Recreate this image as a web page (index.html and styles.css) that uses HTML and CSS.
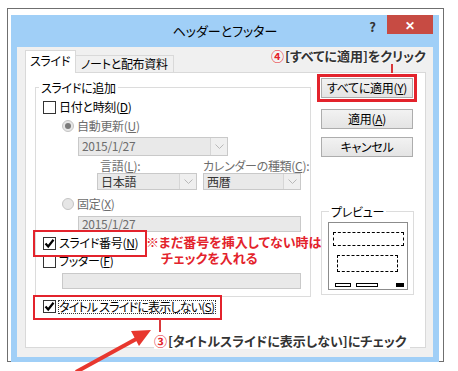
FILE: index.html
```html
<!DOCTYPE html>
<html lang="ja">
<head>
    <meta charset="UTF-8">
    <title>ヘッダーとフッター</title>
    <link rel="stylesheet" href="styles.css">
</head>
<body>
    <div class="page">
        <div class="frame">
            <div class="window">
                <div class="titlebar">
                    <span></span>
                    <span class="title">ヘッダーとフッター</span>
                    <div class="caption-btns">
                        <span class="help">?</span>
                        <span class="close">✕</span>
                    </div>
                </div>
                <div class="client">
                    <div class="tabs">
                        <div class="tab active">スライド</div>
                        <div class="tab">ノートと配布資料</div>
                    </div>
                    <div class="panel">
                        <div class="left">
                            <fieldset class="group">
                                <legend>スライドに追加</legend>
                                <div class="row r1">
                                    <span class="cb"></span>
                                    <span>日付と時刻(<u>D</u>)</span>
                                </div>
                                <div class="row r2 indent1 dim">
                                    <span class="radio on"></span>
                                    <span>自動更新(<u>U</u>)</span>
                                </div>
                                <div class="row r3 indent2">
                                    <div class="combo date-combo">
                                        <span class="value">2015/1/27</span>
                                        <span class="drop"><svg width="9" height="5" viewBox="0 0 9 5"><path d="M0.5 0.5 L4.5 4.5 L8.5 0.5" fill="none" stroke="#b8b8b8"/></svg></span>
                                    </div>
                                </div>
                                <div class="row r4 dim">
                                    <span class="lbl-lang">言語(<u>L</u>):</span>
                                    <span class="lbl-cal">カレンダーの種類(<u>C</u>):</span>
                                </div>
                                <div class="row r5">
                                    <div class="combo lang-combo">
                                        <span class="value dark">日本語</span>
                                        <span class="drop"><svg width="9" height="5" viewBox="0 0 9 5"><path d="M0.5 0.5 L4.5 4.5 L8.5 0.5" fill="none" stroke="#b8b8b8"/></svg></span>
                                    </div>
                                    <div class="combo cal-combo">
                                        <span class="value dark">西暦</span>
                                        <span class="drop"><svg width="9" height="5" viewBox="0 0 9 5"><path d="M0.5 0.5 L4.5 4.5 L8.5 0.5" fill="none" stroke="#b8b8b8"/></svg></span>
                                    </div>
                                </div>
                                <div class="row r6 indent1 dim">
                                    <span class="radio"></span>
                                    <span>固定(<u>X</u>)</span>
                                </div>
                                <div class="row r7 indent2">
                                    <div class="field fixed-field">2015/1/27</div>
                                </div>
                                <div class="row r8">
                                    <span class="check-label boxed-num">
                                        <span class="cb"><svg width="11" height="11" viewBox="0 0 11 11"><path d="M1.5 5.5 L4.2 8.5 L9.5 1.8" fill="none" stroke="#000" stroke-width="2.2"/></svg></span>
                                        <span>スライド番号(<u>N</u>)</span>
                                    </span>
                                </div>
                                <div class="row r9">
                                    <span class="cb"></span>
                                    <span>フッター(<u>F</u>)</span>
                                </div>
                                <div class="row r10 indent1">
                                    <div class="field footer-field"></div>
                                </div>
                            </fieldset>
                            <div class="check-label title-check">
                                <span class="cb"><svg width="11" height="11" viewBox="0 0 11 11"><path d="M1.5 5.5 L4.2 8.5 L9.5 1.8" fill="none" stroke="#000" stroke-width="2.2"/></svg></span>
                                <span class="focus">タイトル スライドに表示しない(<u>S</u>)</span>
                            </div>
                        </div>
                        <div class="right">
                            <div class="btn marked">すべてに適用(<u>Y</u>)</div>
                            <div class="btn">適用(<u>A</u>)</div>
                            <div class="btn">キャンセル</div>
                            <fieldset class="preview">
                                <legend>プレビュー</legend>
                                <div class="slide">
                                    <div class="ph ph-title"></div>
                                    <div class="ph ph-body"></div>
                                    <div class="ph-foot">
                                        <span class="bar b1"></span>
                                        <span class="bar b2"></span>
                                        <span class="bar b3"></span>
                                    </div>
                                </div>
                            </fieldset>
                        </div>
                    </div>
                </div>
            </div>
        </div>

        <!-- annotations -->
        <div class="note note-apply"><span class="num">④</span>[すべてに適用]をクリック</div>
        <div class="tick tick-apply"></div>
        <div class="note-red">※まだ番号を挿入してない時は<br><span class="second">チェックを入れる</span></div>
        <div class="tick tick-title"></div>
        <div class="note note-title"><span class="num">③</span>[タイトルスライドに表示しない]にチェック</div>
        <svg class="arrow" width="458" height="371" viewBox="0 0 458 371">
            <line x1="76" y1="372" x2="138" y2="338" stroke="#e8372e" stroke-width="4"/>
            <polygon points="151,330 131,331 139,346" fill="#e8372e"/>
        </svg>
    </div>
</body>
</html>
```

FILE: styles.css
```css
body {
    margin: 0;
    background-color: #ffffff;
    font-family: "Noto Sans CJK JP", sans-serif;
    font-size: 12px;
    color: #000000;
    font-feature-settings: "palt";
    white-space: nowrap;
}
.page {
    position: relative;
    width: 458px;
    height: 371px;
    overflow: hidden;
}
.frame {
    box-sizing: border-box;
    width: 437px;
    height: 354px;
    margin: 8px 0 0 7px;
    padding: 6px 4px 4px 3px;
    border: 1px solid #6f6f6f;
}
.window {
    height: 100%;
    display: flex;
    flex-direction: column;
    padding: 0 6px 5px 6px;
    background-color: #a0cff7;
}
.titlebar {
    height: 32px;
    display: grid;
    grid-template-columns: 1fr auto 1fr;
}
.title {
    padding-top: 8px;
    font-size: 13px;
    line-height: 16px;
}
.caption-btns {
    display: flex;
    justify-content: flex-end;
    align-items: flex-start;
}
.help {
    margin: 4px 11px 0 0;
    font-size: 13px;
    font-weight: bold;
    line-height: 16px;
    color: #333333;
}
.close {
    width: 46px;
    height: 19px;
    background-color: #c74b43;
    color: #ffffff;
    font-size: 12px;
    line-height: 19px;
    text-align: center;
    font-weight: bold;
}
.client {
    flex: 1;
    display: flex;
    flex-direction: column;
    padding: 3px 7px 9px 8px;
    background-color: #f0f0f0;
    letter-spacing: -0.3px;
}
.tabs {
    display: flex;
    align-items: flex-end;
    height: 22px;
}
.tab {
    box-sizing: border-box;
    height: 17px;
    padding: 0 5px;
    border: 1px solid #d9d9d9;
    border-bottom: none;
    border-left: none;
    line-height: 16px;
}
.tab.active {
    width: 51px;
    height: 23px;
    margin-bottom: -1px;
    padding: 0 4px;
    border-left: 1px solid #d9d9d9;
    background-color: #ffffff;
    line-height: 20px;
    position: relative;
}
.panel {
    flex: 1;
    display: flex;
    gap: 10px;
    padding: 5px 0 0 9px;
    background-color: #ffffff;
    border: 1px solid #d9d9d9;
}
.left {
    width: 276px;
    margin-top: 2px;
}
fieldset {
    margin: 0;
    min-width: 0;
    border: 1px solid #dcdcdc;
}
legend {
    line-height: 15px;
}
.group {
    padding: 0 0 7px 0;
}
.group legend {
    margin-left: 3px;
    padding: 0 2px;
}
.row {
    display: flex;
    align-items: center;
    padding-left: 7px;
    line-height: 14px;
}
.row.indent1 { padding-left: 26px; }
.row.indent2 { padding-left: 42px; }
.r1 { height: 14px; margin-top: 5px; }
.r2 { height: 14px; margin-top: 5px; }
.r3 { height: 19px; margin-top: 4px; }
.r4 { height: 14px; margin-top: 3px; }
.r5 { height: 17px; margin-top: 0; padding-left: 61px; gap: 6px; }
.r6 { height: 14px; margin-top: 7px; }
.r7 { height: 16px; margin-top: 5px; }
.r8 { height: 14px; margin-top: 4px; }
.r9 { height: 14px; margin-top: 4px; }
.r10 { height: 16px; margin-top: 5px; }
.dim {
    color: #6d6d6d;
}
.lbl-lang {
    margin-left: 57px;
    width: 103px;
}
.cb {
    box-sizing: border-box;
    width: 13px;
    height: 13px;
    margin-right: 3px;
    border: 1px solid #333333;
    background-color: #ffffff;
    display: flex;
    align-items: center;
    justify-content: center;
    flex: none;
}
.radio {
    box-sizing: border-box;
    width: 12px;
    height: 12px;
    margin-right: 3px;
    border: 1px solid #c4c4c4;
    border-radius: 50%;
    background-color: #e6e6e6;
    display: flex;
    align-items: center;
    justify-content: center;
}
.radio.on::before {
    content: "";
    width: 6px;
    height: 6px;
    border-radius: 50%;
    background-color: #7a7a7a;
}
.combo {
    box-sizing: border-box;
    display: flex;
    height: 100%;
    border: 1px solid #c9c9c9;
    background-color: #e9e9e9;
}
.combo .value {
    flex: 1;
    padding-left: 3px;
    color: #6d6d6d;
    line-height: 16px;
}
.combo .value.dark {
    color: #333333;
}
.combo .drop {
    width: 16px;
    border-left: 1px solid #d6d6d6;
    background-color: #efefef;
    display: flex;
    align-items: center;
    justify-content: center;
}
.date-combo { width: 150px; }
.lang-combo { width: 100px; }
.cal-combo { width: 98px; }
.field {
    box-sizing: border-box;
    height: 100%;
    padding-left: 3px;
    border: 1px solid #c9c9c9;
    background-color: #e9e9e9;
    color: #6d6d6d;
    line-height: 14px;
}
.fixed-field { width: 223px; }
.footer-field { width: 239px; }
.check-label {
    position: relative;
    display: flex;
    align-items: center;
}
.boxed-num::after,
.title-check::after {
    content: "";
    position: absolute;
    border: 2px solid #e3232c;
}
.boxed-num::after {
    top: -6px;
    bottom: -7px;
    left: -10px;
    right: -9px;
}
.title-check {
    margin: 3px 0 0 8px;
    width: fit-content;
    height: 13px;
}
.title-check::after {
    top: -5px;
    bottom: -7px;
    left: -10px;
    right: -7px;
}
.focus {
    outline: 1px dotted #333333;
    line-height: 12px;
    padding-right: 1px;
    letter-spacing: -0.8px;
}
.right {
    width: 93px;
}
.btn {
    box-sizing: border-box;
    width: 92px;
    height: 20px;
    border: 1px solid #adadad;
    background: linear-gradient(#f2f2f2, #e4e4e4);
    text-align: center;
    line-height: 18px;
}
.btn + .btn {
    margin-top: 11px;
}
.btn + .btn + .btn {
    margin-top: 8px;
}
.btn.marked {
    outline: 3px solid #e3232c;
    outline-offset: 1px;
}
.preview {
    margin-top: 47px;
    padding: 0 0 4px 6px;
    width: 93px;
    box-sizing: border-box;
}
.preview legend {
    margin-left: 1px;
    padding: 0 2px;
}
.slide {
    box-sizing: border-box;
    width: 80px;
    height: 68px;
    margin-top: 3px;
    padding: 9px 0 0 4px;
    border: 1px solid #8c8c8c;
    background-color: #ffffff;
}
.ph {
    box-sizing: border-box;
    border: 1px dashed #000000;
}
.ph-title {
    width: 71px;
    height: 14px;
}
.ph-body {
    width: 61px;
    height: 17px;
    margin: 9px 0 0 4px;
}
.ph-foot {
    display: flex;
    margin-top: 11px;
    padding-left: 2px;
}
.bar {
    box-sizing: border-box;
    height: 4px;
    border: 1px solid #000000;
}
.b1 { width: 16px; }
.b2 { width: 22px; margin-left: 5px; }
.b3 { width: 8px; margin-left: 18px; background-color: #000000; }

/* annotations */
.note {
    position: absolute;
    font-weight: bold;
    color: #333333;
    text-shadow: 0 0 2px #ffffff, 0 0 2px #ffffff;
}
.note .num {
    color: #e3232c;
    margin-right: 1px;
}
.note-apply {
    left: 271px;
    top: 48px;
    font-size: 13px;
    line-height: 16px;
}
.note-title {
    left: 154px;
    top: 332px;
    font-size: 13px;
    line-height: 17px;
    padding-right: 3px;
    background-color: #ffffff;
}
.tick {
    position: absolute;
    width: 2px;
    background-color: #d9383a;
}
.tick-apply {
    left: 391px;
    top: 64px;
    height: 9px;
}
.tick-title {
    left: 159px;
    top: 318px;
    height: 14px;
}
.note-red {
    position: absolute;
    left: 146px;
    top: 234px;
    font-size: 13px;
    line-height: 16px;
    font-weight: bold;
    color: #e3232c;
}
.note-red .second {
    padding-left: 15px;
}
.arrow {
    position: absolute;
    left: 0;
    top: 0;
}
```
